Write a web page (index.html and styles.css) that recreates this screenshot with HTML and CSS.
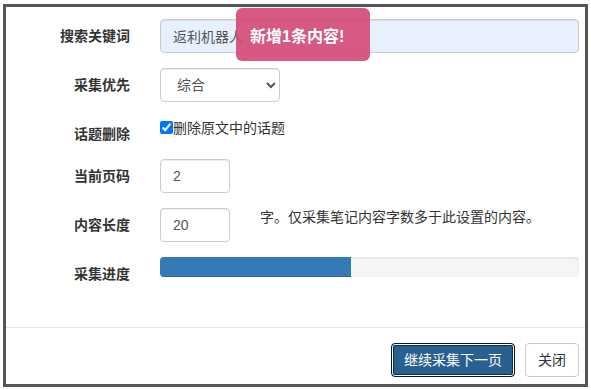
FILE: index.html
```html
<!DOCTYPE html>
<html lang="zh-CN">
<head>
<meta charset="utf-8">
<title>采集</title>
<link rel="stylesheet" href="styles.css">
</head>
<body>
<div class="frame">
  <div class="modal-body">
    <form class="form">
      <label class="lbl">搜索关键词</label>
      <div class="field"><input class="ctrl ctrl-wide autofill" type="text" value="返利机器人"></div>

      <label class="lbl">采集优先</label>
      <div class="field">
        <select class="ctrl ctrl-select">
          <option>综合</option>
          <option>最新</option>
          <option>最热</option>
        </select>
      </div>

      <label class="lbl">话题删除</label>
      <div class="field field-check">
        <label class="check"><input type="checkbox" class="cb" checked>删除原文中的话题</label>
      </div>

      <label class="lbl">当前页码</label>
      <div class="field"><input class="ctrl ctrl-small" type="text" value="2"></div>

      <label class="lbl">内容长度</label>
      <div class="field field-row">
        <input class="ctrl ctrl-small" type="text" value="20">
        <span class="help">字。仅采集笔记内容字数多于此设置的内容。</span>
      </div>

      <label class="lbl">采集进度</label>
      <div class="field">
        <div class="progress"><div class="progress-bar" style="width:45.6%"></div></div>
      </div>
    </form>
  </div>
  <div class="modal-footer">
    <button class="btn btn-primary" type="button">继续采集下一页</button>
    <button class="btn btn-default" type="button">关闭</button>
  </div>
  <div class="toast">新增1条内容!</div>
</div>
</body>
</html>
```

FILE: styles.css
```css
* { box-sizing: border-box; }

html, body {
  margin: 0;
  padding: 0;
  background: #fff;
}

body {
  font-family: "Liberation Sans", "Noto Sans CJK SC", sans-serif;
  font-size: 14px;
  color: #333;
}

.frame {
  position: relative;
  margin: 4px 0 0 3px;
  width: 585px;
  height: 383px;
  border: 3px solid #555;
  overflow: hidden;
  background: #fff;
}

.modal-body {
  padding: 12px 6px 43px 0;
}

.form {
  display: grid;
  grid-template-columns: 124px 1fr;
  column-gap: 30px;
  row-gap: 15px;
  margin: 0;
}

.lbl {
  text-align: right;
  font-weight: bold;
  font-size: 14px;
  line-height: 20px;
  padding-top: 7px;
  color: #333;
}

.field {
  min-width: 0;
}

.ctrl {
  display: block;
  height: 34px;
  padding: 6px 12px;
  font-family: inherit;
  font-size: 14px;
  line-height: 20px;
  color: #555;
  background: #fff;
  border: 1px solid #ccc;
  border-radius: 4px;
  box-shadow: inset 0 1px 1px rgba(0,0,0,.075);
  margin: 0;
}

.ctrl-wide { width: 100%; }
.autofill { background: #e8f0fe; }
.ctrl-select { width: 120px; }
.ctrl-small { width: 70px; }

.field-check {
  height: 27px;
  padding-top: 1px;
}

.check {
  display: flex;
  align-items: flex-start;
  line-height: 20px;
  font-size: 14px;
  color: #333;
}

.cb {
  width: 13px;
  height: 13px;
  margin: 3px 0 0 0;
  flex: none;
}

.field-row {
  display: flex;
  align-items: flex-start;
}

.help {
  margin-left: 30px;
  line-height: 20px;
  margin-top: -1px;
  color: #333;
}

.progress {
  height: 20px;
  background: #f5f5f5;
  border-radius: 4px;
  overflow: hidden;
  box-shadow: inset 0 1px 2px rgba(0,0,0,.1);
}

.progress-bar {
  height: 100%;
  background: #337ab7;
  box-shadow: inset 0 -1px 0 rgba(0,0,0,.15);
}

.modal-footer {
  border-top: 1px solid #e5e5e5;
  padding: 15px 6px 0 0;
  display: flex;
  justify-content: flex-end;
  gap: 10px;
}

.btn {
  height: 34px;
  padding: 6px 12px;
  font-family: inherit;
  font-size: 14px;
  line-height: 20px;
  border-radius: 4px;
  cursor: pointer;
  margin: 0;
}

.btn-primary {
  color: #fff;
  background: #286090;
  border: 1px solid #0d1a26;
  box-shadow: inset 0 0 0 1px #fff, inset 0 0 0 2px #122b40;
}

.btn-default {
  color: #333;
  background: #fff;
  border: 1px solid #ccc;
}

.toast {
  position: absolute;
  left: 230px;
  top: 1px;
  width: 134px;
  height: 53px;
  padding-left: 14px;
  display: flex;
  align-items: center;
  background: rgba(211, 72, 118, 0.9);
  color: #fff;
  font-weight: bold;
  font-size: 16px;
  border-radius: 6px;
}
```
